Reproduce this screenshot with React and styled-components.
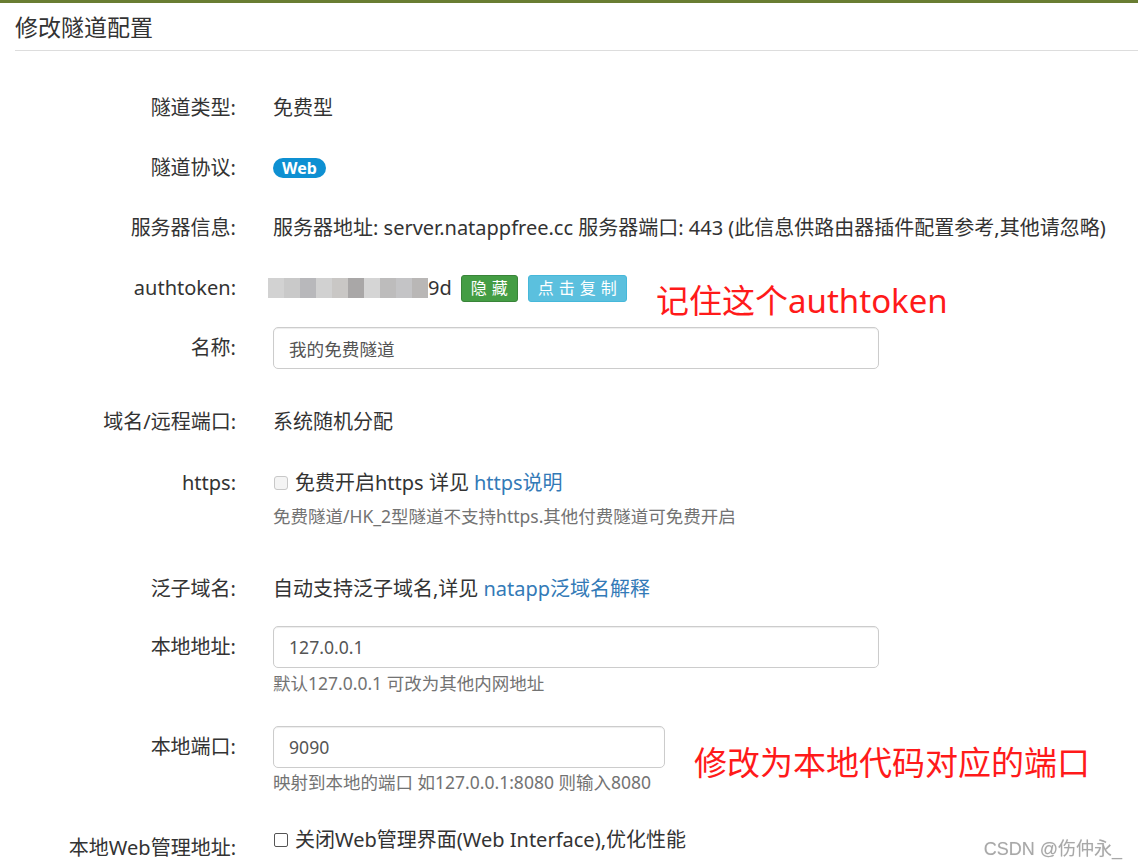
import React from "react";
import styled, { createGlobalStyle } from "styled-components";

const GlobalStyle = createGlobalStyle`
  html, body {
    margin: 0;
    padding: 0;
    background: #fff;
  }
  body {
    font-family: "Noto Sans", "Noto Sans CJK SC", sans-serif;
    color: #333;
    font-size: 20px;
  }
`;

const TopBar = styled.div`
  height: 3px;
  background: #697d32;
`;

const Page = styled.div`
  padding: 0 0 0 15px;
`;

const Title = styled.h3`
  margin: 0;
  padding-top: 9px;
  height: 38px;
  line-height: 30px;
  font-size: 23px;
  font-weight: normal;
  color: #333;
  border-bottom: 1px solid #ddd;
`;

const Form = styled.div`
  padding-top: 36px;
`;

const Row = styled.div`
  display: grid;
  grid-template-columns: 221px 1fr;
  column-gap: 37px;
  align-items: start;
  margin-top: ${(p) => p.$gap || 0}px;
`;

const Label = styled.div`
  text-align: right;
  line-height: 42px;
  white-space: nowrap;
  padding-top: ${(p) => p.$shift || 0}px;
`;

const Value = styled.div`
  position: relative;
  min-width: 0;
`;

const Static = styled.div`
  height: 42px;
  line-height: 42px;
  white-space: nowrap;
  display: flex;
  align-items: center;
`;

const Badge = styled.span`
  display: inline-block;
  background: #0e90d2;
  color: #fff;
  font-weight: bold;
  font-size: 16px;
  line-height: 20px;
  height: 20px;
  padding: 0 9px;
  border-radius: 10px;
`;

const Mosaic = styled.span`
  display: inline-flex;
  height: 20px;
  margin-left: -5px;
`;

const Pixel = styled.span`
  width: 16px;
  height: 20px;
`;

const Btn = styled.span`
  display: inline-block;
  box-sizing: border-box;
  height: 27px;
  line-height: 25px;
  padding: 0 4px 0 9px;
  font-size: 16px;
  letter-spacing: 5px;
  color: #fff;
  border-radius: 3px;
  background: ${(p) => (p.$kind === "info" ? "#5bc0de" : "#449d44")};
  border: 1px solid ${(p) => (p.$kind === "info" ? "#46b8da" : "#398439")};
  margin-left: ${(p) => p.$ml || 0}px;
`;

const Note = styled.div`
  position: absolute;
  left: ${(p) => p.$left}px;
  top: ${(p) => p.$top}px;
  color: #ff1a1a;
  font-size: 33px;
  line-height: 40px;
  white-space: nowrap;
`;

const Input = styled.input`
  display: block;
  box-sizing: border-box;
  width: ${(p) => p.$w}px;
  height: 42px;
  padding: 0 15px;
  font-family: inherit;
  font-size: 17.6px;
  color: #555;
  border: 1px solid #ccc;
  border-radius: 5px;
  box-shadow: inset 0 1px 1px rgba(0, 0, 0, 0.075);
  outline: none;
  background: #fff;
`;

const Help = styled.div`
  font-size: 17.5px;
  line-height: 24px;
  color: #737373;
  margin-top: ${(p) => p.$mt || 0}px;
  white-space: nowrap;
`;

const Check = styled.span`
  display: inline-block;
  box-sizing: border-box;
  width: 14px;
  height: 14px;
  border: 1px solid ${(p) => (p.$dark ? "#555" : "#c8c8c8")};
  border-radius: ${(p) => (p.$dark ? 2 : 3)}px;
  background: ${(p) => (p.$dark ? "#fff" : "#f4f4f4")};
  margin: 0 7px 0 1px;
`;

const Link = styled.a`
  color: #337ab7;
  text-decoration: none;
  margin-left: 5px;
`;

const Watermark = styled.div`
  position: fixed;
  right: 16px;
  bottom: 6px;
  font-family: "Liberation Sans", "Noto Sans CJK SC", sans-serif;
  font-size: 18px;
  color: #a8a8a8;
  text-shadow: 0 0 1px #ddd;
`;

const pixels = [
  "#d2d2d2",
  "#c9c9c9",
  "#b8b8bb",
  "#d1d1d1",
  "#c9c7c5",
  "#a9a7a7",
  "#d5d5d5",
  "#bdbcbc",
  "#c4c4c6",
  "#b9b7b6",
];

export default function App() {
  return (
    <>
      <GlobalStyle />
      <TopBar />
      <Page>
        <Title>修改隧道配置</Title>
        <Form>
          <Row>
            <Label>隧道类型:</Label>
            <Value>
              <Static>免费型</Static>
            </Value>
          </Row>
          <Row $gap={18}>
            <Label>隧道协议:</Label>
            <Value>
              <Static>
                <Badge>Web</Badge>
              </Static>
            </Value>
          </Row>
          <Row $gap={18}>
            <Label>服务器信息:</Label>
            <Value>
              <Static>
                服务器地址: server.natappfree.cc 服务器端口: 443
                (此信息供路由器插件配置参考,其他请忽略)
              </Static>
            </Value>
          </Row>
          <Row $gap={18}>
            <Label>authtoken:</Label>
            <Value>
              <Static>
                <Mosaic>
                  {pixels.map((c, i) => (
                    <Pixel key={i} style={{ background: c }} />
                  ))}
                </Mosaic>
                9d
                <Btn $ml={9}>隐藏</Btn>
                <Btn $kind="info" $ml={10}>
                  点击复制
                </Btn>
              </Static>
              <Note $left={383} $top={14}>
                记住这个authtoken
              </Note>
            </Value>
          </Row>
          <Row $gap={18}>
            <Label>名称:</Label>
            <Value>
              <Input $w={606} defaultValue="我的免费隧道" />
            </Value>
          </Row>
          <Row $gap={32}>
            <Label>域名/远程端口:</Label>
            <Value>
              <Static>系统随机分配</Static>
            </Value>
          </Row>
          <Row $gap={19}>
            <Label>https:</Label>
            <Value>
              <Static>
                <Check />
                免费开启https 详见<Link>https说明</Link>
              </Static>
              <Help>免费隧道/HK_2型隧道不支持https.其他付费隧道可免费开启</Help>
            </Value>
          </Row>
          <Row $gap={40}>
            <Label>泛子域名:</Label>
            <Value>
              <Static>
                自动支持泛子域名,详见<Link>natapp泛域名解释</Link>
              </Static>
            </Value>
          </Row>
          <Row $gap={16}>
            <Label>本地地址:</Label>
            <Value>
              <Input $w={606} defaultValue="127.0.0.1" />
              <Help $mt={3}>默认127.0.0.1 可改为其他内网地址</Help>
            </Value>
          </Row>
          <Row $gap={31}>
            <Label>本地端口:</Label>
            <Value>
              <Input $w={392} defaultValue="9090" />
              <Help $mt={2}>映射到本地的端口 如127.0.0.1:8080 则输入8080</Help>
              <Note $left={421} $top={17}>
                修改为本地代码对应的端口
              </Note>
            </Value>
          </Row>
          <Row $gap={25}>
            <Label $shift={8}>本地Web管理地址:</Label>
            <Value>
              <Static>
                <Check $dark />
                关闭Web管理界面(Web Interface),优化性能
              </Static>
            </Value>
          </Row>
        </Form>
      </Page>
      <Watermark>CSDN @伤仲永_</Watermark>
    </>
  );
}
